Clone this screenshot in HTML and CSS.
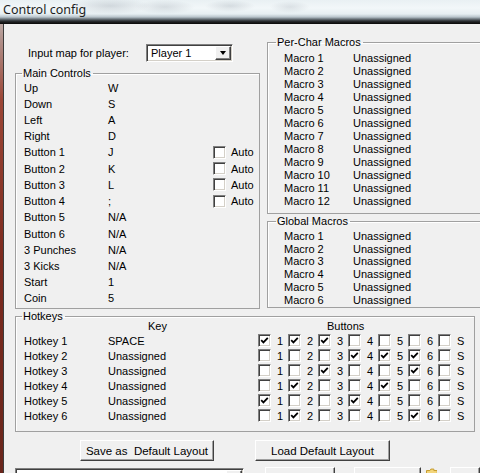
FILE: index.html
```html
<!DOCTYPE html>
<html lang="en">
<head>
    <meta charset="UTF-8">
    <title>Control config</title>
    <link rel="stylesheet" href="styles.css">
</head>
<body>
<div class="window">
    <div class="titlebar"><span class="title">Control config</span></div>
    <div class="client">
        <div class="top">
            <div class="leftcol">
                <div class="player-row">
                    <span class="player-label">Input map for player:</span>
                    <div class="combo"><span class="combo-text">Player 1</span><span class="combo-btn"><span class="arrow"></span></span></div>
                </div>
                <fieldset class="group main">
                    <legend>Main Controls</legend>
                    <div class="crow"><span>Up</span><span>W</span></div>
                    <div class="crow"><span>Down</span><span>S</span></div>
                    <div class="crow"><span>Left</span><span>A</span></div>
                    <div class="crow"><span>Right</span><span>D</span></div>
                    <div class="crow"><span>Button 1</span><span>J</span><span class="cb"></span><span>Auto</span></div>
                    <div class="crow"><span>Button 2</span><span>K</span><span class="cb"></span><span>Auto</span></div>
                    <div class="crow"><span>Button 3</span><span>L</span><span class="cb"></span><span>Auto</span></div>
                    <div class="crow"><span>Button 4</span><span>;</span><span class="cb"></span><span>Auto</span></div>
                    <div class="crow"><span>Button 5</span><span>N/A</span></div>
                    <div class="crow"><span>Button 6</span><span>N/A</span></div>
                    <div class="crow"><span>3 Punches</span><span>N/A</span></div>
                    <div class="crow"><span>3 Kicks</span><span>N/A</span></div>
                    <div class="crow"><span>Start</span><span>1</span></div>
                    <div class="crow"><span>Coin</span><span>5</span></div>
                </fieldset>
            </div>
            <div class="rightcol">
                <fieldset class="group perchar">
                    <legend>Per-Char Macros</legend>
                    <div class="mrow"><span>Macro 1</span><span>Unassigned</span></div>
                    <div class="mrow"><span>Macro 2</span><span>Unassigned</span></div>
                    <div class="mrow"><span>Macro 3</span><span>Unassigned</span></div>
                    <div class="mrow"><span>Macro 4</span><span>Unassigned</span></div>
                    <div class="mrow"><span>Macro 5</span><span>Unassigned</span></div>
                    <div class="mrow"><span>Macro 6</span><span>Unassigned</span></div>
                    <div class="mrow"><span>Macro 7</span><span>Unassigned</span></div>
                    <div class="mrow"><span>Macro 8</span><span>Unassigned</span></div>
                    <div class="mrow"><span>Macro 9</span><span>Unassigned</span></div>
                    <div class="mrow"><span>Macro 10</span><span>Unassigned</span></div>
                    <div class="mrow"><span>Macro 11</span><span>Unassigned</span></div>
                    <div class="mrow"><span>Macro 12</span><span>Unassigned</span></div>
                </fieldset>
                <fieldset class="group global">
                    <legend>Global Macros</legend>
                    <div class="mrow"><span>Macro 1</span><span>Unassigned</span></div>
                    <div class="mrow"><span>Macro 2</span><span>Unassigned</span></div>
                    <div class="mrow"><span>Macro 3</span><span>Unassigned</span></div>
                    <div class="mrow"><span>Macro 4</span><span>Unassigned</span></div>
                    <div class="mrow"><span>Macro 5</span><span>Unassigned</span></div>
                    <div class="mrow"><span>Macro 6</span><span>Unassigned</span></div>
                </fieldset>
            </div>
        </div>

        <fieldset class="group hotkeys">
            <legend>Hotkeys</legend>
            <div class="hhead"><span></span><span class="key-head">Key</span><span class="btn-head">Buttons</span></div>
            <div class="hrow" data-on="1,2,3"><span>Hotkey 1</span><span>SPACE</span></div>
            <div class="hrow" data-on="4,5,6"><span>Hotkey 2</span><span>Unassigned</span></div>
            <div class="hrow" data-on="3,6"><span>Hotkey 3</span><span>Unassigned</span></div>
            <div class="hrow" data-on="2,5"><span>Hotkey 4</span><span>Unassigned</span></div>
            <div class="hrow" data-on="1,4"><span>Hotkey 5</span><span>Unassigned</span></div>
            <div class="hrow" data-on="2,6"><span>Hotkey 6</span><span>Unassigned</span></div>
        </fieldset>

        <div class="layout-buttons">
            <span class="btn save-layout">Save as  Default Layout</span>
            <span class="btn load-layout">Load Default Layout</span>
        </div>

        <div class="bottom-row">
            <div class="combo wide"><span class="combo-text"></span><span class="combo-btn"></span></div>
            <span class="btn small">Load Macro</span>
            <span class="btn small">Save Macro</span>
            <svg class="folder" width="12" height="10" viewBox="0 0 12 10"><path d="M0.5 2.5 H4 L5 1 H8 V2.5 H11.5 V10 H0.5 Z" fill="#f3d57a" stroke="#c59a2a"/></svg>
            <span class="btn tiny"></span>
        </div>
    </div>
</div>

<script src="script.js"></script>
</body>
</html>
```

FILE: styles.css
```css
body {
    margin: 0;
    width: 480px;
    height: 473px;
    overflow: hidden;
    font-family: "Liberation Sans", Arial, sans-serif;
    font-size: 11px;
    color: #000;
    background: #f0f0f0;
}
.window {
    height: 473px;
    display: flex;
    flex-direction: column;
    background: linear-gradient(to bottom, #d0cccb 0, #b0908a 40px, #9c4636 100px, #7c2a1e 260px, #6a261c 473px);
}

/* glass caption */
.titlebar {
    height: 24px;
    flex: none;
    background:
        radial-gradient(ellipse 40px 8px at 110px 6px, rgba(150,160,170,0.35), transparent),
        radial-gradient(ellipse 30px 7px at 165px 7px, rgba(150,160,170,0.3), transparent),
        radial-gradient(ellipse 25px 6px at 230px 6px, rgba(150,160,170,0.3), transparent),
        radial-gradient(ellipse 20px 6px at 290px 7px, rgba(150,160,170,0.25), transparent),
        linear-gradient(to bottom, #e9f0f3 0, #f2f7f9 8px, #e6eef2 14px, #b9c5cc 17px, #6d777e 19px, #2d3134 21px, #121212 23px, #0a0a0a 24px);
}
.title {
    display: block;
    padding: 2px 0 0 3px;
    font-family: "Noto Sans", "Open Sans", sans-serif;
    font-size: 12.5px;
    line-height: 16px;
    color: #1e1e1e;
}

.client {
    flex: 1;
    margin-left: 3px;
    border-left: 1px solid #3c3c3c;
    background: #f0f0f0;
    padding-left: 11px;
}

.top {
    display: flex;
    gap: 7px;
    height: 285px;
}
.leftcol {
    width: 245px;
    flex: none;
}
.rightcol {
    width: 230px;
    flex: none;
    padding-top: 11.5px;
}

.player-row {
    display: flex;
    align-items: center;
    height: 18px;
    margin-top: 20px;
    margin-bottom: 4.5px;
}
.player-label {
    margin-left: 13px;
    width: 118px;
}

.combo {
    width: 87px;
    height: 18px;
    box-sizing: border-box;
    background: #fff;
    border: 1px solid;
    border-color: #808080 #fff #fff #808080;
    box-shadow: inset 1px 1px 0 #404040, inset -1px -1px 0 #d4d0c8;
    display: flex;
    align-items: center;
    justify-content: space-between;
}
.combo-text {
    padding-left: 4px;
}
.combo-btn {
    width: 16px;
    height: 14px;
    margin-right: 1px;
    box-sizing: border-box;
    background: #f0f0f0;
    border: 1px solid;
    border-color: #fff #404040 #404040 #fff;
    box-shadow: inset -1px -1px 0 #808080;
    display: flex;
    align-items: center;
    justify-content: center;
}
.arrow {
    width: 0;
    height: 0;
    border-left: 3.5px solid transparent;
    border-right: 3.5px solid transparent;
    border-top: 4px solid #000;
}

/* group boxes */
.group {
    margin: 0;
    min-width: 0;
    border: 1px solid #a0a0a0;
    box-shadow: inset 1px 1px 0 #fff;
    border-radius: 0;
}
.group legend {
    padding: 0 2px 0 1px;
    line-height: 13px;
}
.main {
    padding: 0 0 1px 8px;
}
.main legend {
    margin-left: -2px;
}
.crow {
    display: grid;
    grid-template-columns: 84px 105px 13px auto;
    align-items: center;
    height: 16.23px;
}
.crow .cb + span {
    padding-left: 5px;
}

.perchar {
    width: 220px;
    padding: 3px 0 5px 16px;
}
.perchar legend, .global legend {
    margin-left: -8px;
}
.global {
    width: 220px;
    margin-top: 1px;
    padding: 2px 0 1px 16px;
}
.mrow {
    display: grid;
    grid-template-columns: 69px auto;
    align-items: center;
    height: 13px;
}
.global .mrow {
    height: 12.8px;
}

.hotkeys {
    width: 460px;
    box-sizing: border-box;
    margin-top: 0.5px;
    padding: 0 0 8px 8px;
}
.hotkeys legend {
    margin-left: -2px;
}
.hhead, .hrow {
    display: grid;
    grid-template-columns: 84px 150px repeat(7, 30px);
    align-items: center;
}
.hhead {
    height: 16px;
    margin-top: -5px;
}
.hrow {
    height: 14.95px;
}
.key-head {
    padding-left: 40px;
}
.btn-head {
    grid-column: 3 / span 7;
    padding-left: 69px;
}
.hcell {
    display: flex;
    align-items: center;
}
.hcell .cb + span {
    margin-left: 6px;
}

/* classic checkbox */
.cb {
    width: 13px;
    height: 13px;
    box-sizing: border-box;
    background: #fff;
    border: 1px solid;
    border-color: #808080 #fff #fff #808080;
    box-shadow: inset 1px 1px 0 #404040, inset -1px -1px 0 #d4d0c8;
    display: flex;
    align-items: center;
    justify-content: center;
}
.cb svg {
    display: block;
}

/* push buttons */
.btn {
    display: flex;
    align-items: center;
    justify-content: center;
    height: 21px;
    box-sizing: border-box;
    background: #f0f0f0;
    border: 1px solid;
    border-color: #fff #404040 #404040 #fff;
    box-shadow: inset -1px -1px 0 #a0a0a0;
    white-space: pre;
    font-size: 11.5px;
}
.layout-buttons {
    display: flex;
    margin-top: 8px;
    padding-left: 65px;
    gap: 41px;
}
.save-layout {
    width: 134px;
}
.load-layout {
    width: 135px;
}

.bottom-row {
    display: flex;
    align-items: flex-start;
    margin-top: 6px;
}
.combo.wide {
    width: 233px;
    height: 20px;
    margin-top: 1px;
}
.combo.wide .combo-btn {
    height: 16px;
}
.btn.small {
    width: 71px;
    margin-left: 21px;
    align-items: flex-start;
    padding-top: 3px;
    font-size: 11px;
}
.btn.small + .btn.small {
    width: 68px;
    margin-left: 19px;
}
.folder {
    margin-left: 5px;
    margin-top: 1px;
}
.btn.tiny {
    width: 30px;
    margin-left: 13px;
}
```

FILE: script.js
```js
// build the 7 button checkboxes for each hotkey row
var names = ["1", "2", "3", "4", "5", "6", "S"];
var rows = document.querySelectorAll(".hrow");

for (var i = 0; i < rows.length; i++) {
    var on = rows[i].getAttribute("data-on").split(",");
    for (var j = 0; j < names.length; j++) {
        var cell = document.createElement("span");
        cell.className = "hcell";
        var box = document.createElement("span");
        box.className = "cb";
        if (on.indexOf(names[j]) != -1) {
            box.innerHTML = '<svg width="9" height="9" viewBox="0 0 9 9"><path d="M1.2 4.2 L3.4 6.4 L7.8 1.8" fill="none" stroke="#000" stroke-width="1.8"/></svg>';
        }
        var label = document.createElement("span");
        label.textContent = names[j];
        cell.appendChild(box);
        cell.appendChild(label);
        rows[i].appendChild(cell);
    }
}
```
